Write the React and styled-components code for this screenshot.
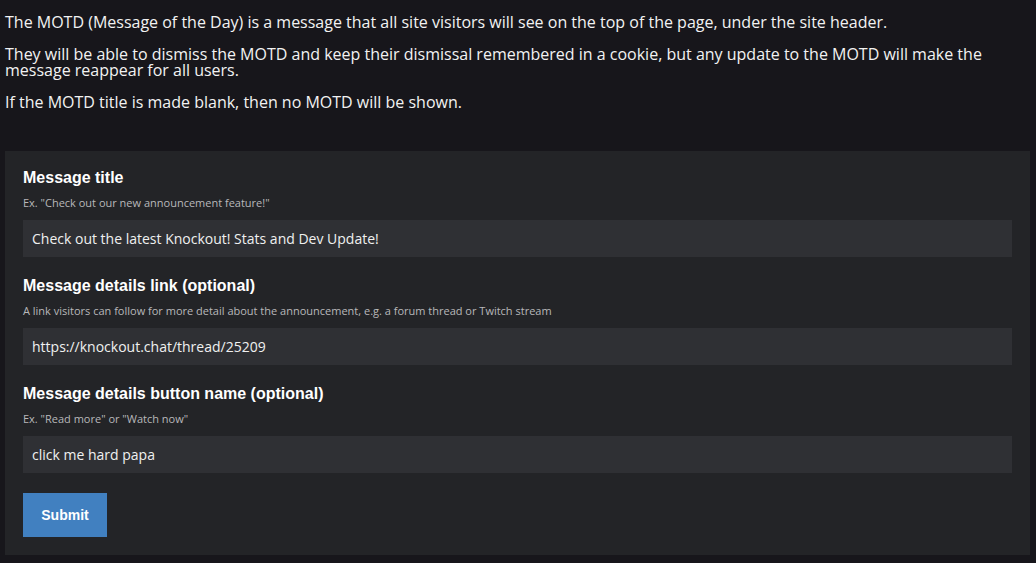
import React, { useState } from 'react';
import styled, { createGlobalStyle } from 'styled-components';

const GlobalStyle = createGlobalStyle`
    html, body {
        margin:0;
        padding:0;
        background:#17161b;
    }
    body {
        font-family:"Open Sans", "Liberation Sans", sans-serif;
        color:#ffffff;
    }
`

const FIELDS = [
    {
        id: 'title',
        label: 'Message title',
        hint: 'Ex. "Check out our new announcement feature!"',
        value: 'Check out the latest Knockout! Stats and Dev Update!'
    },
    {
        id: 'link',
        label: 'Message details link (optional)',
        hint: 'A link visitors can follow for more detail about the announcement, e.g. a forum thread or Twitch stream',
        value: 'https://knockout.chat/thread/25209'
    },
    {
        id: 'button',
        label: 'Message details button name (optional)',
        hint: 'Ex. "Read more" or "Watch now"',
        value: 'click me hard papa'
    }
]

const App = () => {
    const [form, setForm] = useState(
        FIELDS.reduce((acc, f) => ({ ...acc, [f.id]: f.value }), {})
    );

    const handleChange = (e) => {
        setForm({ ...form, [e.target.name]: e.target.value });
    }

    const handleSubmit = (e) => {
        e.preventDefault();
    }

    return (
        <Page>
            <GlobalStyle />
            <Intro>
                <Text>The MOTD (Message of the Day) is a message that all site visitors will see on the top of the page, under the site header.</Text>
                <Text>They will be able to dismiss the MOTD and keep their dismissal remembered in a cookie, but any update to the MOTD will make the message reappear for all users.</Text>
                <Text>If the MOTD title is made blank, then no MOTD will be shown.</Text>
            </Intro>
            <Panel onSubmit={handleSubmit}>
                {
                    FIELDS.map((field) => (
                        <Field key={field.id}>
                            <Label htmlFor={field.id}>{field.label}</Label>
                            <Hint>{field.hint}</Hint>
                            <Input
                                id={field.id}
                                name={field.id}
                                value={form[field.id]}
                                onChange={handleChange}
                            />
                        </Field>
                    ))
                }
                <Button type='submit'>Submit</Button>
            </Panel>
        </Page>
    )
}

export default App;

const Page = styled.div`
    min-height:563px;
    padding:14px 6px 8px 5px;
    box-sizing:border-box;
`

const Intro = styled.div`
    margin-bottom:41px;
    width:1000px;
`

const Text = styled.p`
    margin:0 0 16px 0;
    font-size:16px;
    line-height:16px;
    color:#f2f2f2;
    &:last-child {
        margin-bottom:0;
    }
`

const Panel = styled.form`
    display:flex;
    flex-direction:column;
    align-items:flex-start;
    gap:20px;
    background:#232427;
    padding:18px;
`

const Field = styled.div`
    display:flex;
    flex-direction:column;
    width:100%;
`

const Label = styled.label`
    font-family:"Liberation Sans", Arial, sans-serif;
    font-weight:bold;
    font-size:16px;
    line-height:18px;
    color:#ffffff;
`

const Hint = styled.span`
    margin-top:9px;
    font-size:11px;
    line-height:14px;
    color:#b8b8ba;
`

const Input = styled.input`
    margin-top:10px;
    height:37px;
    box-sizing:border-box;
    width:100%;
    border:none;
    outline:none;
    background:#2f3034;
    color:#f0f0f0;
    padding:0 9px;
    font-family:"Open Sans", "Liberation Sans", sans-serif;
    font-size:14px;
`

const Button = styled.button`
    width:84px;
    height:44px;
    border:none;
    background:#4180c0;
    color:#ffffff;
    font-family:"Liberation Sans", Arial, sans-serif;
    font-weight:bold;
    font-size:14px;
    cursor:pointer;
`
